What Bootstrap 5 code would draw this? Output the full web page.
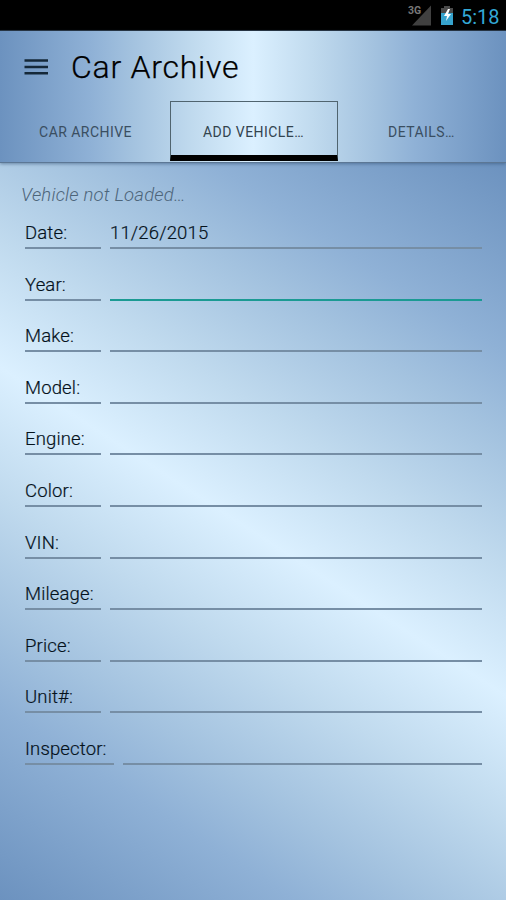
<!DOCTYPE html>
<html lang="en">
<head>
<meta charset="utf-8">
<meta name="viewport" content="width=device-width, initial-scale=1">
<title>Car Archive</title>
<link href="https://cdn.jsdelivr.net/npm/bootstrap@5.3.0/dist/css/bootstrap.min.css" rel="stylesheet">
<style>
  :root { --steel: #6c92bf 0%, #8fb1d6 18%, #a3c2df 26%, #c0daee 38%, #dbf0ff 50%, #c0daee 62%, #a3c2df 74%, #8fb1d6 82%, #6c92bf 100%; }
  body { font-family: Roboto, "Noto Sans", sans-serif; color: #05121c; height: 900px; overflow: hidden; }
  .status-bar { height: 31px; background: #000; padding: 3px 7px 0 0; border-bottom: 1px solid #26323f; }
  .clock { font-size: 20px; line-height: 28px; color: #33a9d6; margin-left: 7px; width: 38px; white-space: nowrap; }
  .app-head { height: 132px; border-bottom: 1px solid #5c7795; box-shadow: 0 1px 3px rgba(50, 80, 115, .55); position: relative;
    background: linear-gradient(90deg, var(--steel)); }
  .title-row { height: 70px; padding: 2px 0 0 24px; }
  .app-title { font-size: 32px; font-weight: 300; letter-spacing: .75px; margin-left: 22px; line-height: 1; color: #000; -webkit-text-stroke: .25px #000; }
  .tab-strip { height: 60px; padding-left: 1px; }
  .tab-strip .nav-link { width: 168px; height: 60px; padding: 0; border-radius: 0; font-size: 14px; line-height: 63px;
    letter-spacing: .45px; text-align: center; color: #3a4e61; border: 0; white-space: nowrap; }
  .tab-strip .nav-link.active { border: 1.6px solid #50646f; border-bottom: 6px solid #000; line-height: 61px; color: #33444f;
    background: transparent; }
  .form-area { background: linear-gradient(33deg, var(--steel)); }
  .notice { font-size: 18.5px; font-style: italic; font-weight: 300; line-height: 24px; color: #4d657a; padding: 20px 0 0 21px; height: 34px; letter-spacing: .2px; }
  .entry-row { height: 51.6px; padding: 0 24px 0 25px; gap: 9px; }
  .entry-label, .entry-box { height: 36px; border-bottom: 2px solid #768ea5; font-size: 18.5px; line-height: 22px; padding-top: 9px;
    letter-spacing: .15px; -webkit-text-stroke: .2px #05121c; }
  .entry-label { min-width: 76px; padding-right: 7px; }
  .entry-box.current { border-bottom-color: #1b9a93; }
</style>
<script src="https://cdn.jsdelivr.net/npm/bootstrap@5.3.0/dist/js/bootstrap.bundle.min.js"></script>
</head>
<body class="d-flex flex-column m-0 fw-light">
  <div class="status-bar d-flex justify-content-end align-items-start flex-shrink-0">
    <svg width="26" height="24" viewBox="0 0 26 24"><path d="M25 2.5v20H6z" fill="#404040"/><text x="2" y="11" font-family="Roboto, sans-serif" font-size="10.5" font-weight="700" fill="#777">3G</text></svg>
    <svg class="ms-2" width="14" height="24" viewBox="0 0 14 24"><path d="M4 3h6v2h3v6H1V5h3z" fill="#4a4a4a"/><path d="M1 10h12v12H1z" fill="#36a3cd"/><path d="M8 6 4 13h3l-1 5 5-7H8l2-5z" fill="#fff"/></svg>
    <span class="clock fw-normal">5:18</span>
  </div>
  <header class="app-head flex-shrink-0">
    <div class="title-row d-flex align-items-center">
      <svg width="25" height="18" viewBox="0 0 25 18"><path d="M.5 2.5h23.5M.5 9h23.5M.5 15.3h23.5" stroke="#152838" stroke-width="2.6"/></svg>
      <h1 class="app-title mb-0">Car Archive</h1>
    </div>
    <nav class="nav tab-strip flex-nowrap justify-content-center fw-normal">
      <a class="nav-link">CAR ARCHIVE</a>
      <a class="nav-link active">ADD VEHICLE…</a>
      <a class="nav-link">DETAILS…</a>
    </nav>
  </header>
  <main class="form-area flex-grow-1">
    <div class="notice mb-3">Vehicle not Loaded…</div>
    <div class="entry-row d-flex"><div class="entry-label">Date:</div><div class="entry-box flex-grow-1">11/26/2015</div></div>
    <div class="entry-row d-flex"><div class="entry-label">Year:</div><div class="entry-box flex-grow-1 current"></div></div>
    <div class="entry-row d-flex"><div class="entry-label">Make:</div><div class="entry-box flex-grow-1"></div></div>
    <div class="entry-row d-flex"><div class="entry-label">Model:</div><div class="entry-box flex-grow-1"></div></div>
    <div class="entry-row d-flex"><div class="entry-label">Engine:</div><div class="entry-box flex-grow-1"></div></div>
    <div class="entry-row d-flex"><div class="entry-label">Color:</div><div class="entry-box flex-grow-1"></div></div>
    <div class="entry-row d-flex"><div class="entry-label">VIN:</div><div class="entry-box flex-grow-1"></div></div>
    <div class="entry-row d-flex"><div class="entry-label">Mileage:</div><div class="entry-box flex-grow-1"></div></div>
    <div class="entry-row d-flex"><div class="entry-label">Price:</div><div class="entry-box flex-grow-1"></div></div>
    <div class="entry-row d-flex"><div class="entry-label">Unit#:</div><div class="entry-box flex-grow-1"></div></div>
    <div class="entry-row d-flex"><div class="entry-label">Inspector:</div><div class="entry-box flex-grow-1"></div></div>
  </main>
</body>
</html>
